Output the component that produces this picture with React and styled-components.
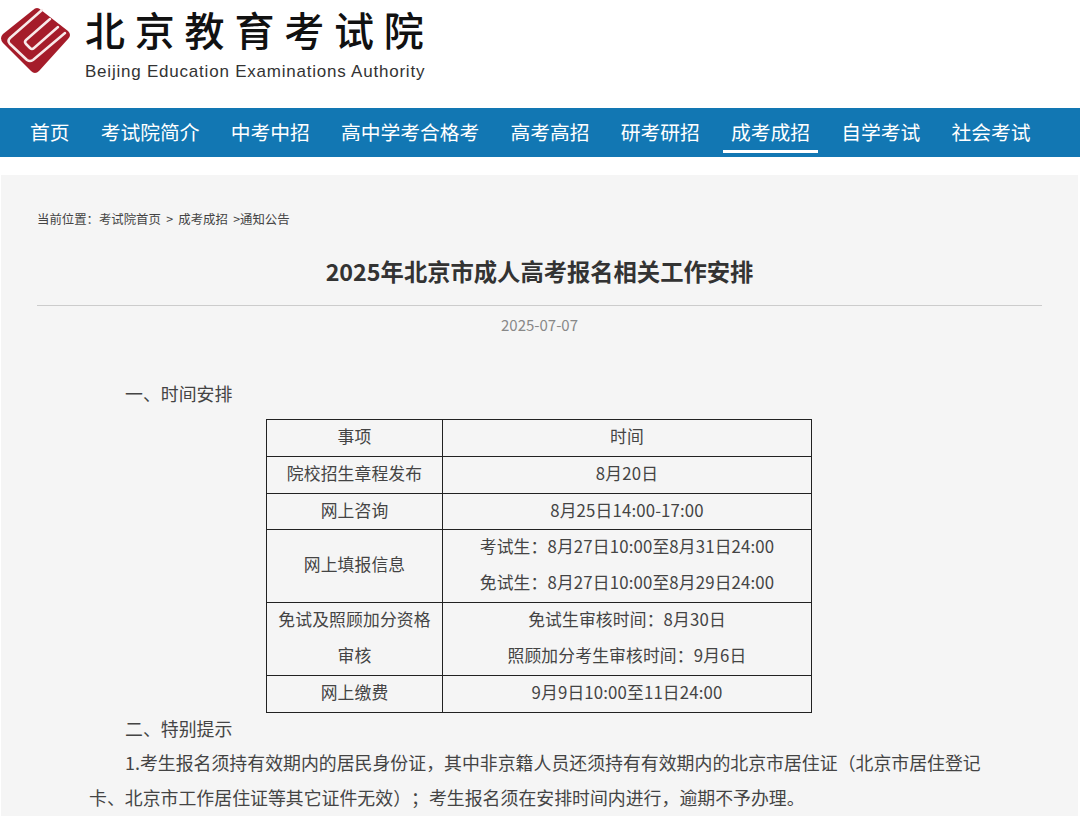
import React from "react";
import styled, { createGlobalStyle } from "styled-components";

const Global = createGlobalStyle`
  html, body { margin: 0; padding: 0; background: #fff; }
  body { width: 1080px; height: 816px; overflow: hidden; font-family: "Liberation Sans", "Noto Sans CJK SC", sans-serif; color: #333; }
`;
const Header = styled.header`
  height: 108px;
  display: flex;
  align-items: flex-start;
  gap: 13px;
  box-sizing: border-box;
`;
const LogoText = styled.div`
  display: flex;
  flex-direction: column;
  margin-top: 4px;
`;
const LogoCn = styled.div`
  font-family: "Noto Sans CJK SC", sans-serif;
  font-size: 40px;
  line-height: 50px;
  font-weight: 500;
  letter-spacing: 9.8px;
  color: #111;
  white-space: nowrap;
`;
const LogoEn = styled.div`
  font-size: 17px;
  line-height: 20px;
  margin-top: 8px;
  letter-spacing: 0.78px;
  color: #333;
  white-space: nowrap;
`;
const Nav = styled.nav`
  height: 49px;
  background: #1277b3;
  display: flex;
  gap: 15.1px;
  padding-left: 22px;
`;
const NavItem = styled.a`
  box-sizing: border-box;
  height: 45px;
  padding: 0 8px;
  font-family: "Noto Sans CJK SC", sans-serif;
  font-size: 19.8px;
  line-height: 47px;
  color: #fff;
  white-space: nowrap;
  border-bottom: ${(p) => (p.$active ? "3px solid #fff" : "none")};
`;
const Panel = styled.main`
  margin: 18px 2px 0 1px;
  background: #f5f5f5;
  padding: 36px 36px 0;
  height: 641px;
  box-sizing: border-box;
  overflow: hidden;
`;
const Crumbs = styled.div`
  font-family: "Noto Sans CJK SC", sans-serif;
  font-size: 12.4px;
  line-height: 16px;
  word-spacing: 2.5px;
  color: #444;
`;
const Title = styled.h1`
  margin: 26px 0 0;
  font-family: "Noto Sans CJK SC", sans-serif;
  font-size: 23.3px;
  line-height: 36px;
  font-weight: 700;
  text-align: center;
  color: #333;
  padding-bottom: 16px;
  border-bottom: 1px solid #ccc;
`;
const DateLine = styled.div`
  margin-top: 10px;
  text-align: center;
  font-family: "Noto Sans CJK SC", sans-serif;
  font-size: 15px;
  line-height: 18px;
  color: #888;
`;
const Body = styled.div`
  margin: 42px 50px 0 52px;
  font-family: "Noto Sans CJK SC", sans-serif;
  font-size: 17.9px;
  line-height: 34.5px;
  color: #444;
  text-spacing-trim: space-all;
`;
const Para = styled.p`
  margin: ${(p) => p.$top || 0} 0 0;
  text-indent: 36px;
`;
const Table = styled.table`
  border-collapse: collapse;
  width: 546px;
  margin: 8px 0 0 177px;
  font-size: 16.8px;
  letter-spacing: 0.15px;
  table-layout: fixed;
`;
const Cell = styled.td`
  box-sizing: border-box;
  border: 1px solid #222;
  text-align: center;
  padding: 0 8px;
  color: #444;
  width: ${(p) => p.$w || "auto"};
`;
const CellLine = styled.div`
  line-height: ${(p) => (p.$short ? "35px" : "36px")};
  margin: ${(p) => (p.$short ? "-1px 0 1px" : "-2px 0 2px")};
`;

const rows = [
  { a: "院校招生章程发布", b: ["8月20日"] },
  { a: "网上咨询", b: ["8月25日14:00-17:00"], short: true },
  { a: "网上填报信息", b: ["考试生：8月27日10:00至8月31日24:00", "免试生：8月27日10:00至8月29日24:00"] },
  { a: "免试及照顾加分资格审核", b: ["免试生审核时间：8月30日", "照顾加分考生审核时间：9月6日"] },
  { a: "网上缴费", b: ["9月9日10:00至11日24:00"] },
];
const nav = ["首页", "考试院简介", "中考中招", "高中学考合格考", "高考高招", "研考研招", "成考成招", "自学考试", "社会考试"];

const Logo = () => (
  <svg width="72" height="78" viewBox="0 0 72 78" style={{ flexShrink: 0 }}>
    <path d="M33 10 Q37 6 41 10 L68 31 Q72 35 68 39 L39 71 Q35 75 31 71 L3 43 Q-1 38 3 34 Z" fill="#a51c2a" />
    <g fill="none" stroke="#f8eaea" strokeWidth="2.5" strokeLinecap="round" strokeLinejoin="round">
      <path d="M42 10 L10 38 Q7 41 10 44 L27 60 Q30 62 33 60 L65 33" />
      <path d="M50 19 L26 40 Q24 42 26 44 L30 48 Q32 50 34 48 L58 27" />
    </g>
  </svg>
);

export default function App() {
  return (
    <>
      <Global />
      <Header>
        <Logo />
        <LogoText>
          <LogoCn>北京教育考试院</LogoCn>
          <LogoEn>Beijing Education Examinations Authority</LogoEn>
        </LogoText>
      </Header>
      <Nav>
        {nav.map((n) => (
          <NavItem key={n} $active={n === "成考成招"}>{n}</NavItem>
        ))}
      </Nav>
      <Panel>
        <Crumbs>当前位置：考试院首页 &gt; 成考成招 &gt;通知公告</Crumbs>
        <Title>2025年北京市成人高考报名相关工作安排</Title>
        <DateLine>2025-07-07</DateLine>
        <Body>
          <Para>一、时间安排</Para>
          <Table>
            <tbody>
              <tr>
                <Cell $w="176px"><CellLine>事项</CellLine></Cell>
                <Cell><CellLine>时间</CellLine></Cell>
              </tr>
              {rows.map((r) => (
                <tr key={r.a}>
                  <Cell><CellLine $short={r.short}>{r.a}</CellLine></Cell>
                  <Cell>
                    {r.b.map((l) => (
                      <CellLine key={l} $short={r.short}>{l}</CellLine>
                    ))}
                  </Cell>
                </tr>
              ))}
            </tbody>
          </Table>
          <Para $top="-2px">二、特别提示</Para>
          <Para>1.考生报名须持有效期内的居民身份证，其中非京籍人员还须持有有效期内的北京市居住证（北京市居住登记卡、北京市工作居住证等其它证件无效）；考生报名须在安排时间内进行，逾期不予办理。</Para>
        </Body>
      </Panel>
    </>
  );
}
